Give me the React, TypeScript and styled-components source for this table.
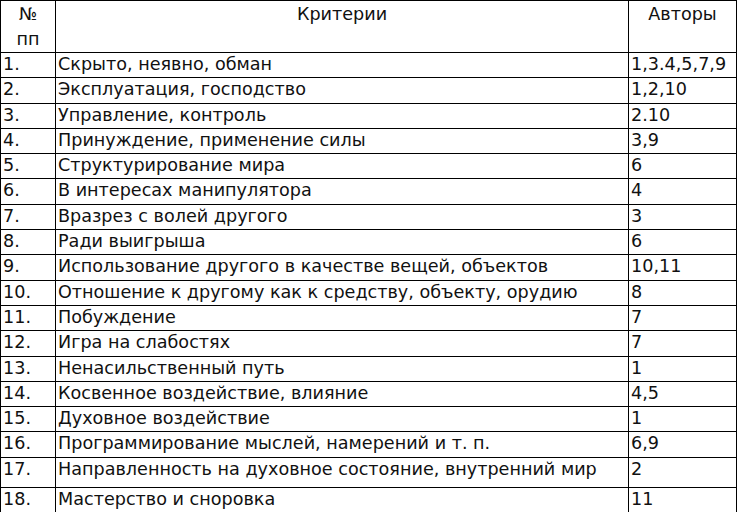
import React from "react";
import styled, { createGlobalStyle } from "styled-components";

const Global = createGlobalStyle`
  html, body { margin: 0; padding: 0; background: #ffffff; }
  body { font-family: "DejaVu Sans", "Noto Sans", sans-serif; color: #111; }
`;

const Table = styled.table`
  border-collapse: collapse;
  width: 736px;
  table-layout: fixed;
  font-size: 17.6px;
  line-height: 23px;
`;

const Col = styled.col<{ $w: number }>`
  width: ${(p) => p.$w}px;
`;

const Row = styled.tr<{ $h: number }>`
  height: ${(p) => p.$h}px;
`;

const HeadCell = styled.th`
  border: 1px solid #000;
  font-weight: normal;
  text-align: center;
  vertical-align: top;
  line-height: 25px;
  padding: 1px 2px 0;
`;

const Cell = styled.td`
  border: 1px solid #000;
  vertical-align: top;
  text-align: left;
  padding: 0 0 0 2px;
  white-space: nowrap;
  overflow: hidden;
`;

const rows: [string, string][] = [
  ["Скрыто, неявно, обман", "1,3.4,5,7,9"],
  ["Эксплуатация, господство", "1,2,10"],
  ["Управление, контроль", "2.10"],
  ["Принуждение, применение силы", "3,9"],
  ["Структурирование мира", "6"],
  ["В интересах манипулятора", "4"],
  ["Вразрез с волей другого", "3"],
  ["Ради выигрыша", "6"],
  ["Использование другого в качестве вещей, объектов", "10,11"],
  ["Отношение к другому как к средству, объекту, орудию", "8"],
  ["Побуждение", "7"],
  ["Игра на слабостях", "7"],
  ["Ненасильственный путь", "1"],
  ["Косвенное воздействие, влияние", "4,5"],
  ["Духовное воздействие", "1"],
  ["Программирование мыслей, намерений и т. п.", "6,9"],
  ["Направленность на духовное состояние, внутренний мир", "2"],
  ["Мастерство и сноровка", "11"],
  ["", ""],
];

export default function App() {
  return (
    <>
      <Global />
      <Table>
        <colgroup>
          <Col $w={55} />
          <Col $w={573} />
          <Col $w={108} />
        </colgroup>
        <thead>
          <Row $h={50}>
            <HeadCell>
              №
              <br />
              пп
            </HeadCell>
            <HeadCell>Критерии</HeadCell>
            <HeadCell>Авторы</HeadCell>
          </Row>
        </thead>
        <tbody>
          {rows.map(([c, a], i) => (
            <Row key={i} $h={i === 16 ? 30 : 25.3}>
              <Cell>{c || a ? `${i + 1}.` : ""}</Cell>
              <Cell>{c}</Cell>
              <Cell>{a}</Cell>
            </Row>
          ))}
        </tbody>
      </Table>
    </>
  );
}
